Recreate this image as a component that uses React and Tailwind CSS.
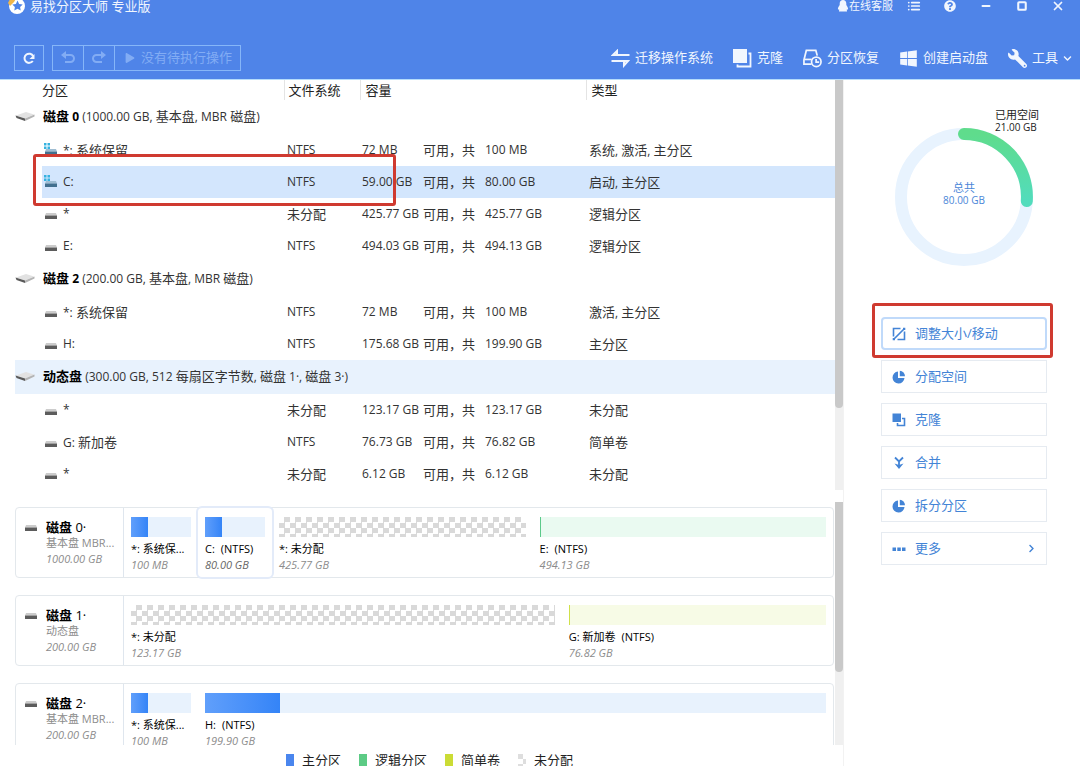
import { Fragment } from "react"
import clsx from "clsx"
import {
  FaChevronDown,
  FaChevronRight,
  FaPlay,
  FaQuestionCircle,
  FaWindows,
  FaWrench,
} from "react-icons/fa"
import { FiList, FiMinus, FiSquare, FiX } from "react-icons/fi"

const disks = [
  {
    name: "磁盘 0",
    info: "(1000.00 GB, 基本盘, MBR 磁盘)",
    partitions: [
      { name: "*: 系统保留", system: true, fs: "NTFS", free: "72 MB", total: "100 MB", type: "系统, 激活, 主分区" },
      { name: "C:", system: true, selected: true, fs: "NTFS", free: "59.00 GB", total: "80.00 GB", type: "启动, 主分区" },
      { name: "*", fs: "未分配", free: "425.77 GB", total: "425.77 GB", type: "逻辑分区" },
      { name: "E:", fs: "NTFS", free: "494.03 GB", total: "494.13 GB", type: "逻辑分区" },
    ],
  },
  {
    name: "磁盘 2",
    info: "(200.00 GB, 基本盘, MBR 磁盘)",
    partitions: [
      { name: "*: 系统保留", fs: "NTFS", free: "72 MB", total: "100 MB", type: "激活, 主分区" },
      { name: "H:", fs: "NTFS", free: "175.68 GB", total: "199.90 GB", type: "主分区" },
    ],
  },
  {
    name: "动态盘",
    info: "(300.00 GB, 512 每扇区字节数, 磁盘 1·, 磁盘 3·)",
    active: true,
    partitions: [
      { name: "*", fs: "未分配", free: "123.17 GB", total: "123.17 GB", type: "未分配" },
      { name: "G: 新加卷", fs: "NTFS", free: "76.73 GB", total: "76.82 GB", type: "简单卷" },
      { name: "*", fs: "未分配", free: "6.12 GB", total: "6.12 GB", type: "未分配" },
    ],
  },
]

const maps = [
  {
    name: "磁盘",
    number: "0·",
    kind: "基本盘 MBR...",
    size: "1000.00 GB",
    segments: [
      { label: "*: 系统保...", size: "100 MB", color: "blue", used: 28 },
      { label: "C:", fs: "(NTFS)", size: "80.00 GB", color: "blue", used: 28, selected: true },
      { label: "*: 未分配", size: "425.77 GB", color: "empty", grow: 260 },
      { label: "E:", fs: "(NTFS)", size: "494.13 GB", color: "green", grow: 302 },
    ],
  },
  {
    name: "磁盘",
    number: "1·",
    kind: "动态盘",
    size: "200.00 GB",
    segments: [
      { label: "*: 未分配", size: "123.17 GB", color: "empty", grow: 425 },
      { label: "G: 新加卷", fs: "(NTFS)", size: "76.82 GB", color: "lime", grow: 258 },
    ],
  },
  {
    name: "磁盘",
    number: "2·",
    kind: "基本盘 MBR...",
    size: "200.00 GB",
    segments: [
      { label: "*: 系统保...", size: "100 MB", color: "blue", used: 28 },
      { label: "H:", fs: "(NTFS)", size: "199.90 GB", color: "blue", used: 12, grow: 1 },
    ],
  },
]

const barColors = {
  blue: "bg-[#e8f2fd]",
  green: "bg-[#eafaf1] border-l border-[#5cc98a]",
  lime: "bg-[#f7fbe6] border-l border-[#cfe04a]",
  empty: "bg-[repeating-conic-gradient(#d9d9d9_0_25%,#ffffff_0_50%)] bg-[length:11px_11px]",
}

const legend = [
  { label: "主分区", color: "bg-[#4a86ee]" },
  { label: "逻辑分区", color: "bg-[#5ccb85]" },
  { label: "简单卷", color: "bg-[#cbdc35]" },
  { label: "未分配", color: "bg-[repeating-conic-gradient(#ffffff_0_25%,#dedede_0_50%)] bg-[length:10px_10px]" },
]

const actions = [
  { label: "调整大小/移动", icon: ResizeIcon, highlighted: true },
  { label: "分配空间", icon: PieIcon },
  { label: "克隆", icon: CloneIcon },
  { label: "合并", icon: MergeIcon },
  { label: "拆分分区", icon: PieIcon },
  { label: "更多", icon: MoreIcon, more: true },
]

const tools = [
  { label: "迁移操作系统", icon: MigrateIcon },
  { label: "克隆", icon: ToolCloneIcon },
  { label: "分区恢复", icon: RecoveryIcon },
  { label: "创建启动盘", icon: FaWindows },
  { label: "工具", icon: FaWrench, menu: true, flip: true },
]

// Chinese runs are set one pixel larger than the latin text around them
function Mixed({ text }) {
  return text
    .split(/([\u4e00-\u9fff，]+)/)
    .map((part, i) => (i % 2 ? <span key={i} className="text-[13px]">{part}</span> : part))
}

function Logo() {
  return (
    <svg viewBox="0 0 18 18" className="size-[18px] shrink-0">
      <circle cx="9" cy="9" r="8" fill="#ffffff" />
      <path d="M0 6 3 0h6L6 5 2 9z" fill="#f0b64a" />
      <path d="m9.500 3.600 1.600 3.300 3.600.5-2.600 2.500.6 3.600-3.200-1.700-3.200 1.700.6-3.600-2.600-2.500 3.600-.5z" fill="#4f84e8" />
    </svg>
  )
}

function PenguinIcon() {
  return (
    <svg viewBox="0 0 12 14" className="h-3.5 w-3" fill="currentColor">
      <path d="M6 1c2 0 3.300 1.500 3.300 3.400v1.700c.9 1.200 1.800 2.600 1.800 4 0 .7-.4.8-.9.2L9.600 11c.6.5.8 1.600-.3 1.600H2.700c-1.100 0-.9-1.100-.3-1.600l-.6-.7c-.5.6-.9.5-.9-.2 0-1.400.9-2.800 1.800-4V4.400C2.700 2.500 4 1 6 1z" />
    </svg>
  )
}

function RefreshIcon() {
  return (
    <svg viewBox="0 0 14 14" className="size-3.5" fill="none" stroke="currentColor" strokeWidth="2">
      <path d="M10.800 10A4.600 4.600 0 1 1 11.200 5.200" />
      <path d="M12.500 3v5H7.500z" fill="currentColor" stroke="none" />
    </svg>
  )
}

function UndoIcon({ className }) {
  return (
    <svg viewBox="0 0 16 14" className={clsx("h-3.5 w-4", className)} fill="none" stroke="currentColor" strokeWidth="2">
      <path d="M4 4h6.500a3.500 3.500 0 0 1 0 7H5" />
      <path d="M6 0v8L1 4z" fill="currentColor" stroke="none" />
    </svg>
  )
}

function MigrateIcon({ className }) {
  return (
    <svg viewBox="0 0 19 19" className={className} fill="none" stroke="currentColor" strokeWidth="2">
      <path d="M18.500 6H2l4-4v4" />
      <path d="M.5 12H17l-4 4.500V12" />
    </svg>
  )
}

function ToolCloneIcon({ className }) {
  return (
    <svg viewBox="0 0 19 19" className={className}>
      <path d="M0 0h14v14H0z" fill="currentColor" />
      <path d="M15.500 4.500h2v13H4.500v-2" fill="none" stroke="currentColor" strokeWidth="1.800" />
    </svg>
  )
}

function RecoveryIcon({ className }) {
  return (
    <svg viewBox="0 0 20 20" className={className} fill="none" stroke="currentColor" strokeWidth="1.800">
      <path d="M9 16H1v-4.500L3.500 1.500h10L15 7" />
      <path d="M1.500 11H9" />
      <circle cx="14" cy="13.500" r="5" />
      <path d="M13.800 10.500v3.300H17" />
    </svg>
  )
}

function ResizeIcon() {
  return (
    <svg viewBox="0 0 14 14" className="size-3.5" fill="none" stroke="currentColor" strokeWidth="1.600">
      <path d="M8.500 1.500h-7v8M5.500 12.500h7v-8" />
      <path d="M1.500 12.500l11-11M1.500 11v1.500H3M11 1.500h1.500V3" />
    </svg>
  )
}

function PieIcon() {
  return (
    <svg viewBox="0 0 14 14" className="size-3.5" fill="currentColor">
      <path d="M6 1.500V8h6.500A6 6 0 1 1 6 1.500z" />
      <path d="M7.800.8a5.500 5.500 0 0 1 5.200 5.400H7.800z" />
    </svg>
  )
}

function CloneIcon() {
  return (
    <svg viewBox="0 0 14 14" className="size-3.5">
      <path d="M.5.5h8.500V9H.500z" fill="currentColor" />
      <path d="M10 5.500h2.500v7h-7V10" fill="none" stroke="currentColor" strokeWidth="1.600" />
    </svg>
  )
}

function MergeIcon() {
  return (
    <svg viewBox="0 0 14 14" className="size-3.5">
      <path d="m3 1.500 4 4 4-4M7 5v4" fill="none" stroke="currentColor" strokeWidth="1.800" />
      <path d="M2.500 7.500 7 9l4.500-1.500L7 13z" fill="currentColor" />
    </svg>
  )
}

function MoreIcon() {
  return (
    <svg viewBox="0 0 14 14" className="size-3.5" fill="currentColor">
      <path d="M.5 5.500H4V9H.500zM5.300 5.500h3.500V9H5.300zM10 5.500h3.500V9H10z" />
    </svg>
  )
}

function DiskIcon() {
  return (
    <svg viewBox="0 0 20 12" className="h-3 w-5 shrink-0">
      <path d="M1 5.500 11 2l8 2.500-9 4z" fill="#e2e2e2" />
      <path d="m.5 5.500 9.500 3v2.500L1.500 8z" fill="#5a5a5a" />
      <path d="m10 8.500 9.500-4v2l-9.500 4.500z" fill="#b4b4b4" />
    </svg>
  )
}

function DriveIcon({ system }) {
  return (
    <svg viewBox="0 0 14 14" className="size-3.5 shrink-0">
      <path d="M2 6h10l1 2.500H1z" fill={system ? "#9fbdd2" : "#cccccc"} />
      <path d="M1 8.500h12V12H1z" fill={system ? "#42708f" : "#5c5c5c"} />
      {system && (
        <path d="M0 0h2.500v2.500H0zM3.500 0H6v2.500H3.500zM0 3.500h2.500V6H0zM3.500 3.500H6V6H3.500z" fill="#35b2e0" />
      )}
    </svg>
  )
}

function Header() {
  return (
    <header className="bg-[#4f84e8] text-[#f1f6fe] border-b border-[#b5dcfb] pb-2">
      <div className="flex h-3 items-center justify-between">
        <h1 className="flex items-center gap-1 pl-2 text-[13px] leading-4">
          <Logo />
          易找分区大师 专业版
        </h1>
        <div className="flex items-center pr-1">
          <button className="flex items-center pr-[3px] text-[11px] leading-4">
            <PenguinIcon />
            在线客服
          </button>
          <button aria-label="菜单" className="flex w-9 justify-center"><FiList size={14} strokeWidth={3} /></button>
          <button aria-label="帮助" className="flex w-9 justify-center"><FaQuestionCircle size={12} /></button>
          <button aria-label="最小化" className="flex w-9 justify-center"><FiMinus size={12} strokeWidth={4} /></button>
          <button aria-label="最大化" className="flex w-9 justify-center"><FiSquare size={10} strokeWidth={5} /></button>
          <button aria-label="关闭" className="flex w-9 justify-center"><FiX size={14} strokeWidth={3} /></button>
        </div>
      </div>

      <div className="mt-[33px] flex items-center justify-between pl-3.5 pr-2">
        <div className="flex gap-2 text-[13px]">
          <button aria-label="刷新" className="flex h-[26px] w-[30px] items-center justify-center border border-[#86b6f8]">
            <RefreshIcon />
          </button>
          <div className="flex h-[26px] divide-x divide-[#86b6f8] border border-[#86b6f8] text-[#82acf4]">
            <button aria-label="撤销" disabled className="flex w-[31px] items-center justify-center"><UndoIcon /></button>
            <button aria-label="重做" disabled className="flex w-[31px] items-center justify-center">
              <UndoIcon className="-scale-x-100" />
            </button>
            <button disabled className="flex items-center gap-1.5 pl-2.5 pr-2">
              <FaPlay size={10} />
              没有待执行操作
            </button>
          </div>
        </div>
        <nav className="flex gap-5 text-[13px]">
          {tools.map(({ label, icon: Icon, menu, flip }) => (
            <button key={label} className="flex items-center gap-[5px]">
              <Icon className={clsx("size-[19px]", flip && "-scale-x-100")} />
              {label}
              {menu && <FaChevronDown size={9} />}
            </button>
          ))}
        </nav>
      </div>
    </header>
  )
}

function PartitionTable() {
  return (
    <div className="flex-1 pl-[15px]">
      <table className="w-full table-fixed border-collapse text-left text-xs text-[#333333]">
        <colgroup>
          <col className="w-[27px]" />
          <col className="w-[242px]" />
          <col className="w-[76px]" />
          <col className="w-[62px]" />
          <col className="w-[61px]" />
          <col className="w-[103px]" />
          <col />
        </colgroup>
        <thead>
          <tr className="h-5 text-[13px] leading-4 text-[#222222]">
            <th className="p-0" />
            <th className="p-0 font-normal">分区</th>
            <th className="border-l border-[#e4e4e4] p-0 pl-1 font-normal">文件系统</th>
            <th colSpan={3} className="border-l border-[#e4e4e4] p-0 pl-[5px] font-normal">容量</th>
            <th className="border-l border-[#e4e4e4] p-0 pl-[5px] font-normal">类型</th>
          </tr>
        </thead>
        <tbody>
          {disks.map((disk) => (
            <Fragment key={disk.name}>
              <tr className={clsx("h-[34px]", disk.active && "bg-[#e8f2fd]")}>
                <td colSpan={7} className="p-0 pb-0.5">
                  <div className="flex items-center gap-2 leading-4">
                    <DiskIcon />
                    <p>
                      <b className="text-black"><Mixed text={disk.name} /></b> <Mixed text={disk.info} />
                    </p>
                  </div>
                </td>
              </tr>
              {disk.partitions.map((item, i) => (
                <tr key={i} className={clsx("h-8 leading-4", item.selected && "[&>td+td]:bg-[#d3e6fd]")}>
                  <td className="p-0" />
                  <td className="relative p-0">
                    <div className="flex items-center gap-[5px] pl-0.5">
                      <DriveIcon system={item.system} />
                      <span><Mixed text={item.name} /></span>
                    </div>
                    {item.selected && (
                      <div className="absolute -left-[9px] -top-3 z-10 h-[52px] w-[363px] rounded-[3px] border-[3px] border-[#cf3a30]" />
                    )}
                  </td>
                  <td className="p-0 pl-[3px]"><Mixed text={item.fs} /></td>
                  <td className="whitespace-nowrap p-0 pl-0.5">{item.free}</td>
                  <td className="whitespace-nowrap p-0 pl-px text-[13px]">可用，共</td>
                  <td className="p-0 pl-0.5">{item.total}</td>
                  <td className="p-0 pl-[3px]"><Mixed text={item.type} /></td>
                </tr>
              ))}
            </Fragment>
          ))}
        </tbody>
      </table>
    </div>
  )
}

function Segment({ segment }) {
  return (
    <div
      className={clsx(
        "px-[7px] pt-[9px]",
        segment.grow ? "basis-0" : "w-[74px] shrink-0",
        segment.selected && "rounded outline-2 outline-[#e3ebf9]"
      )}
      style={{ flexGrow: segment.grow || 0 }}
    >
      <div className={clsx("h-5", barColors[segment.color])}>
        {segment.used && (
          <div
            className="h-full bg-linear-to-r from-[#609ffb] to-[#3484f7]"
            style={{ width: `${segment.used}%` }}
          />
        )}
      </div>
      <p className="mt-1 flex gap-1.5 whitespace-nowrap text-[11px] leading-4 text-black">
        <span>{segment.label}</span>
        {segment.fs && <span>{segment.fs}</span>}
      </p>
      <p
        className={clsx(
          "whitespace-nowrap text-[11px] italic leading-4",
          segment.selected ? "text-[#666666]" : "text-[#8c8c8c]"
        )}
      >
        {segment.size}
      </p>
    </div>
  )
}

function DiskMap({ map }) {
  return (
    <div className="flex h-[71px] shrink-0 rounded border border-[#e3e8ec]">
      <div className="flex w-[108px] shrink-0 gap-2 border-r border-[#dfe6ee] pl-2 pt-[11px]">
        <DriveIcon />
        <div className="whitespace-nowrap text-[11px] leading-4 text-[#8c8c8c]">
          <p className="text-[13px] text-black"><b>{map.name}</b> {map.number}</p>
          <p>{map.kind}</p>
          <p className="italic">{map.size}</p>
        </div>
      </div>
      <div className="flex min-w-0 flex-1">
        {map.segments.map((segment, i) => (
          <Segment key={i} segment={segment} />
        ))}
      </div>
    </div>
  )
}

function Scrollbar({ thumb }) {
  return (
    <div className="w-2 shrink-0 bg-[#f0f0f0]">
      <div className="w-full rounded-b bg-[#c9c9c9]" style={{ height: `${thumb}%` }} />
    </div>
  )
}

function UsageRing() {
  return (
    <div className="relative mx-auto size-[138px]">
      <svg viewBox="0 0 138 138" className="size-full">
        <defs>
          <linearGradient id="used" x1="0" y1="0" x2="0" y2="1">
            <stop offset="0" stopColor="#5fdc8c" />
            <stop offset="1" stopColor="#52dcbc" />
          </linearGradient>
        </defs>
        <circle cx="69" cy="69" r="63" fill="none" stroke="#e8f3fe" strokeWidth="12" />
        <path
          d="M69 6A63 63 0 0 1 131.800 73"
          fill="none"
          stroke="url(#used)"
          strokeWidth="12"
          strokeLinecap="round"
        />
      </svg>
      <div className="absolute inset-0 flex flex-col items-center justify-center pb-1.5 text-[10px] leading-[13px] text-[#4a86d8]">
        <span className="text-[11px]">总共</span>
        <span>80.00 GB</span>
      </div>
      <div className="absolute -top-5 left-[100px] flex flex-col whitespace-nowrap text-[10px] leading-[13px] text-[#222222]">
        <span className="text-[11px]">已用空间</span>
        <span>21.00 GB</span>
      </div>
    </div>
  )
}

function Sidebar() {
  return (
    <aside className="w-[237px] shrink-0 border-l border-[#f2f2f2] pl-[37px] pr-[33px] pt-12">
      <UsageRing />
      <div className="mt-[51px] flex flex-col gap-2.5">
        {actions.map(({ label, icon: Icon, highlighted, more }) => (
          <div key={label} className="relative">
            <button
              className={clsx(
                "flex h-[33px] w-full items-center gap-[9px] border text-[13px] text-[#4384d6]",
                highlighted ? "rounded-sm border-2 border-[#c0dafa] px-[9px]" : "border-[#e6ebf1] px-2.5"
              )}
            >
              <Icon />
              {label}
              {more && <FaChevronRight size={9} className="ml-auto" />}
            </button>
            {highlighted && (
              <div className="pointer-events-none absolute -bottom-2 -left-[9px] -right-1.5 -top-3.5 rounded-[3px] border-[3px] border-[#cf3a30]" />
            )}
          </div>
        ))}
      </div>
    </aside>
  )
}

export default function App() {
  return (
    <div className="flex h-screen flex-col overflow-hidden bg-white font-['Open_Sans','Noto_Sans_CJK_SC',sans-serif]">
      <Header />
      <div className="flex min-h-0 flex-1">
        <main className="flex min-w-0 flex-1 flex-col">
          <section className="flex shrink-0">
            <PartitionTable />
            <Scrollbar thumb={80} />
          </section>
          <section className="mt-3 flex min-h-0 flex-1">
            <div className="flex min-w-0 flex-1 flex-col gap-[17px] overflow-hidden pl-[15px] pr-px pt-[5px]">
              {maps.map((map) => (
                <DiskMap key={map.number} map={map} />
              ))}
            </div>
            <Scrollbar thumb={70} />
          </section>
          <footer className="flex h-[21px] shrink-0 justify-center gap-[18px] pl-4 pt-2 text-[13px] leading-4 text-[#222222]">
            {legend.map((item) => (
              <span key={item.label} className="flex items-center gap-2">
                <i className={clsx("h-3 w-2", item.color)} />
                {item.label}
              </span>
            ))}
          </footer>
        </main>
        <Sidebar />
      </div>
    </div>
  )
}
